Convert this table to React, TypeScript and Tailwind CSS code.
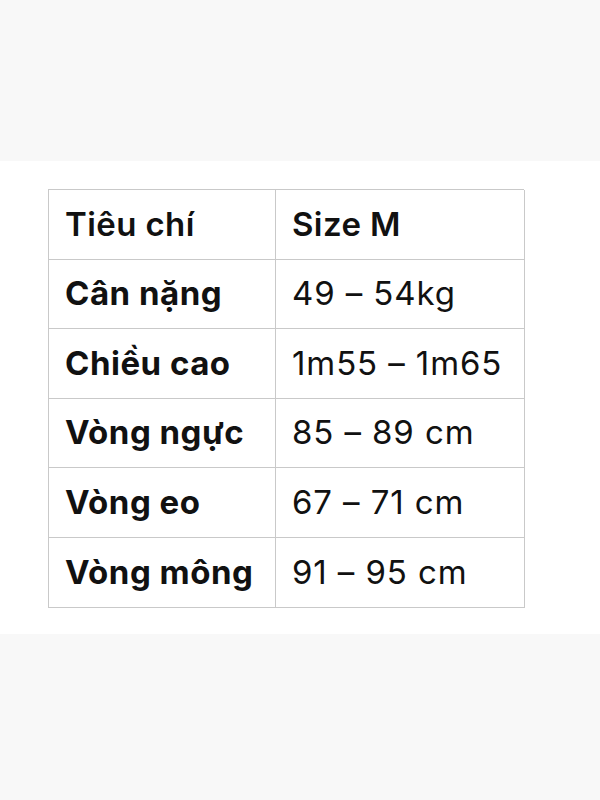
const ROWS: [string, string][] = [
  ["Cân nặng", "49 – 54kg"],
  ["Chiều cao", "1m55 – 1m65"],
  ["Vòng ngực", "85 – 89 cm"],
  ["Vòng eo", "67 – 71 cm"],
  ["Vòng mông", "91 – 95 cm"],
];

const cell =
  "flex h-[69.6px] items-center border-b border-r border-[#c9c9c9] pl-[16px] text-[33px]";

export default function App() {
  return (
    <div
      className="min-h-screen bg-[#f8f8f8] pt-[161px] text-[#111111]"
      style={{ fontFamily: "Inter, 'Noto Sans', sans-serif" }}
    >
      <div className="bg-white pb-[26px] pl-[48px] pt-[28px]">
        <div className="grid w-[476px] grid-cols-[227px_249px] border-l border-t border-[#c9c9c9]">
          <div className={`${cell} font-semibold tracking-[0.4px]`}>Tiêu chí</div>
          <div className={`${cell} font-semibold tracking-[0.4px]`}>Size M</div>
          {ROWS.map(([label, value]) => (
            <div key={label} className="contents">
              <div className={`${cell} font-bold tracking-[0.5px]`}>{label}</div>
              <div className={`${cell} font-normal tracking-[0.9px]`}>{value}</div>
            </div>
          ))}
        </div>
      </div>
    </div>
  );
}
